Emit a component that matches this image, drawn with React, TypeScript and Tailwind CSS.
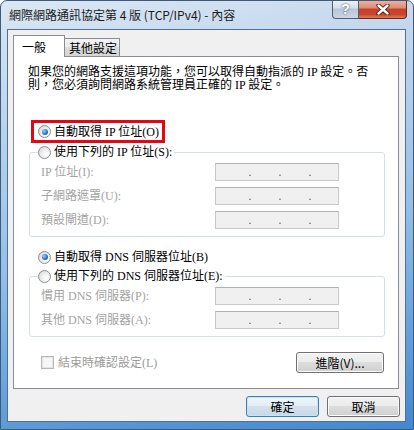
import type { ReactNode } from "react"

const ui = "font-['Noto_Sans_CJK_TC','Liberation_Sans',sans-serif]"
const body = "font-['Liberation_Serif','Noto_Sans_CJK_TC',serif]"

function Radio({ checked }: { checked?: boolean }) {
  return (
    <span className="flex h-[13px] w-[13px] shrink-0 items-center justify-center rounded-full border border-[#8e8f8f] bg-[radial-gradient(circle_at_65%_65%,#ffffff_0%,#eceef0_45%,#c9ccd1_100%)]">
      {checked && (
        <span className="h-[6px] w-[6px] rounded-full bg-[radial-gradient(circle_at_35%_35%,#9fd0f4_0%,#2a78bf_55%,#0c4a86_100%)]" />
      )}
    </span>
  )
}

function IpBox() {
  return (
    <div className="flex h-[18px] w-[124px] items-center border border-[#c9c9c9] border-t-[#adb0b5] bg-[#f0f0f0] pl-[4px] font-['Liberation_Sans',sans-serif] text-[12px] leading-[16px] text-[#5f5f5f]">
      <span className="w-[28px]" />
      <span className="w-[4px] text-center">.</span>
      <span className="w-[26px]" />
      <span className="w-[4px] text-center">.</span>
      <span className="w-[26px]" />
      <span className="w-[4px] text-center">.</span>
    </div>
  )
}

function Button({ children, primary, className }: { children: ReactNode; primary?: boolean; className?: string }) {
  return (
    <button
      className={`${className ?? ""} flex h-[21px] items-center justify-center rounded-[3px] border text-[12px] leading-none text-black ${ui} ${
        primary
          ? "border-[#3c7fb1] bg-[linear-gradient(#eef5fa_0%,#e3edf5_49%,#d4e1ec_50%,#c8d8e6_100%)] shadow-[inset_0_0_0_1px_#c4e5f8]"
          : "border-[#707070] bg-[linear-gradient(#f2f2f2_0%,#ebebeb_49%,#dddddd_50%,#cfcfcf_100%)] shadow-[inset_0_0_0_1px_#fcfcfc]"
      }`}
    >
      {children}
    </button>
  )
}

function Group({ legend, rows }: { legend: string; rows: string[] }) {
  return (
    <fieldset className="ml-[1px] w-[356px] rounded-[3px] border border-[#d5dfe5] pb-[7px]">
      <legend className="ml-[8px] pr-[2px]">
        <span className={`flex h-[16px] items-center gap-[3px] text-[12px] text-black ${body}`}>
          <Radio />
          {legend}
        </span>
      </legend>
      <div className="flex flex-col gap-[6px] pl-[11px] pt-[3px]">
        {rows.map(label => (
          <div key={label} className="flex h-[18px] items-center">
            <span className={`w-[174px] text-[12px] text-[#a3a3a3] ${body}`}>{label}</span>
            <IpBox />
          </div>
        ))}
      </div>
    </fieldset>
  )
}

export default function App() {
  return (
    <div
      className={`flex h-[430px] w-[414px] flex-col overflow-hidden rounded-t-[7px] border border-[#3f5a78] bg-[linear-gradient(170deg,#dbe7f4_0%,#c4d8ee_18%,#93bfe9_55%,#4288cf_100%)] ${ui}`}
    >
      <div className="flex h-[28px] shrink-0 items-start">
        <div className="flex-1 whitespace-nowrap pl-[8px] pt-[6px] text-[12px] leading-[16px] text-[#1b1b1b]">
          網際網路通訊協定第 4 版 (TCP/IPv4) - 內容
        </div>
        <div className="-mt-[1px] mr-[6px] flex">
          <div className="flex h-[19px] w-[27px] items-center justify-center rounded-bl-[4px] border border-t-0 border-[#4f5e70] bg-[linear-gradient(#eef2f7_0%,#d6dfea_45%,#b7c5d6_50%,#c9d6e5_100%)] font-['Liberation_Sans',sans-serif] text-[14px] font-bold leading-none text-white [text-shadow:0_0_2px_#26354a]">
            ?
          </div>
          <div className="flex h-[19px] w-[48px] items-center justify-center rounded-br-[4px] border border-l-0 border-t-0 border-[#6b2619] bg-[linear-gradient(#ebb7aa_0%,#dc8a74_45%,#c54129_50%,#c8452b_80%,#de7d5e_100%)]">
            <svg width="14" height="11" viewBox="0 0 14 11">
              <path d="M2.5 1.5 L11.5 9.5 M11.5 1.5 L2.5 9.5" stroke="#4a160d" strokeWidth="4.2" strokeLinecap="round" fill="none" />
              <path d="M2.5 1.5 L11.5 9.5 M11.5 1.5 L2.5 9.5" stroke="#ffffff" strokeWidth="2.4" strokeLinecap="round" fill="none" />
            </svg>
          </div>
        </div>
      </div>

      <div className="mb-[7px] ml-[6px] mr-[7px] flex flex-1 flex-col border border-[#52718f] bg-[#f0f0f0] pl-[5px] pt-[5px]">
        <div className="flex h-[21px] items-start">
          <div className="relative z-10 flex h-[22px] w-[52px] items-center border border-b-0 border-[#898c95] bg-white pl-[8px] text-[12px] text-black">
            一般
          </div>
          <div className="mt-[3px] flex h-[18px] w-[55px] items-center border-r border-t border-[#898c95] bg-[linear-gradient(#f3f3f3_0%,#ebebeb_49%,#dddddd_50%,#d5d5d5_100%)] pl-[4px] text-[12px] text-black">
            其他設定
          </div>
        </div>

        <div className="flex h-[333px] w-[386px] flex-col border border-[#898c95] bg-white pl-[14px] pr-[14px]">
          <p className={`mt-[9px] whitespace-nowrap text-[12px] leading-[13px] text-black ${body}`}>
            如果您的網路支援這項功能，您可以取得自動指派的 IP 設定。否
            <br />
            則，您必須詢問網路系統管理員正確的 IP 設定。
          </p>

          <div className={`ml-[3px] mt-[28px] flex h-[23px] w-[134px] items-center gap-[3px] border-[3px] border-[#e30613] pl-[4px] text-[12px] text-black ${body}`}>
            <Radio checked />
            自動取得 IP 位址(O)
          </div>

          <div className="mt-[1px]">
            <Group legend="使用下列的 IP 位址(S):" rows={["IP 位址(I):", "子網路遮罩(U):", "預設閘道(D):"]} />
          </div>

          <div className={`mt-[12px] flex h-[16px] items-center gap-[3px] pl-[10px] text-[12px] text-black ${body}`}>
            <Radio checked />
            自動取得 DNS 伺服器位址(B)
          </div>

          <div className="mt-[3px]">
            <Group legend="使用下列的 DNS 伺服器位址(E):" rows={["慣用 DNS 伺服器(P):", "其他 DNS 伺服器(A):"]} />
          </div>

          <div className="mt-[15px] flex h-[21px] items-center">
            <div className="ml-[13px] flex items-center gap-[4px]">
              <span className="h-[13px] w-[13px] border border-[#b8b8b8] bg-[#f6f6f6] shadow-[inset_0_0_0_1px_#e4e4e4]" />
              <span className={`text-[12px] text-[#9a9a9a] ${body}`}>結束時確認設定(L)</span>
            </div>
            <Button className="ml-auto w-[88px]">進階(V)...</Button>
          </div>
        </div>

        <div className="mt-[7px] flex justify-end gap-[8px] pr-[5px]">
          <Button primary className="w-[73px]">確定</Button>
          <Button className="w-[73px]">取消</Button>
        </div>
      </div>
    </div>
  )
}
